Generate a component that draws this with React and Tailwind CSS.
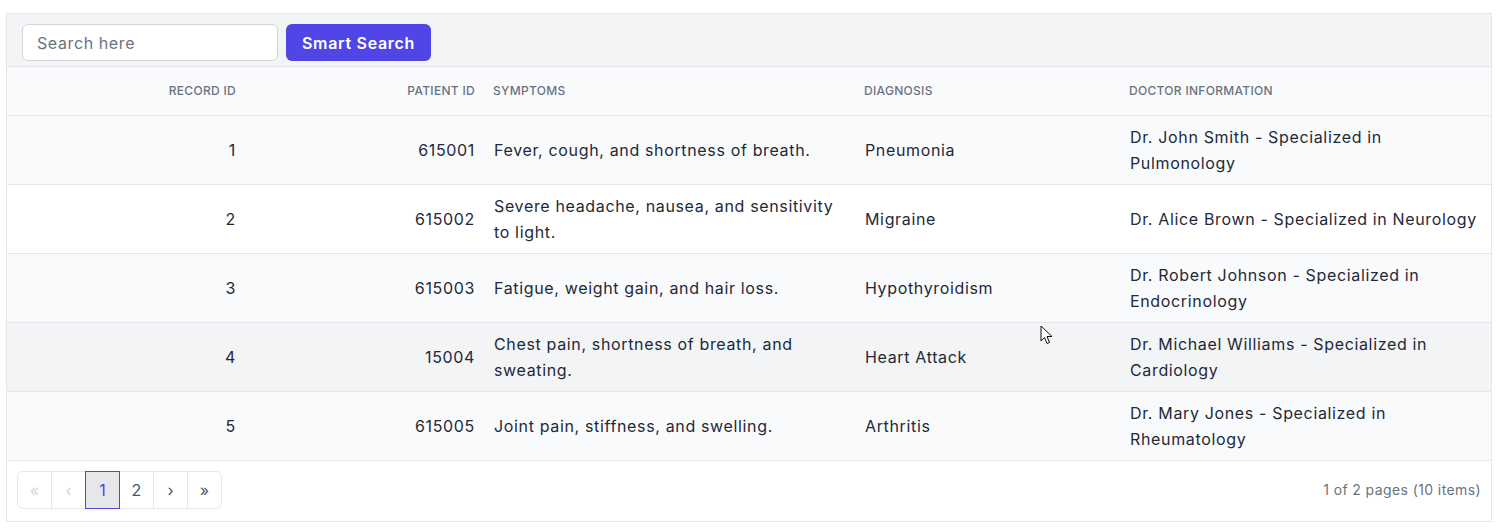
import React from "react";

const records = [
  { id: 1, patient: "615001", symptoms: "Fever, cough, and shortness of breath.", diagnosis: "Pneumonia", doctor: "Dr. John Smith - Specialized in Pulmonology" },
  { id: 2, patient: "615002", symptoms: "Severe headache, nausea, and sensitivity to light.", diagnosis: "Migraine", doctor: "Dr. Alice Brown - Specialized in Neurology" },
  { id: 3, patient: "615003", symptoms: "Fatigue, weight gain, and hair loss.", diagnosis: "Hypothyroidism", doctor: "Dr. Robert Johnson - Specialized in Endocrinology" },
  { id: 4, patient: "15004", symptoms: "Chest pain, shortness of breath, and sweating.", diagnosis: "Heart Attack", doctor: "Dr. Michael Williams - Specialized in Cardiology" },
  { id: 5, patient: "615005", symptoms: "Joint pain, stiffness, and swelling.", diagnosis: "Arthritis", doctor: "Dr. Mary Jones - Specialized in Rheumatology" },
];

const Cursor = () => (
  <svg className="absolute left-[1040px] top-[325px] pointer-events-none" width="14" height="22" viewBox="0 0 14 22">
    <path d="M1 1 L1 16 L4.5 12.5 L7 18.5 L9.5 17.5 L7 11.5 L12 11.5 Z" fill="white" stroke="#111" strokeWidth="1" />
  </svg>
);

const PageBtn = ({ children, active, disabled, first, last }) => (
  <button
    className={
      "h-[38px] w-[35px] -ml-px first:ml-0 flex items-center justify-center text-[16px] border " +
      (first ? "rounded-l-md " : "") +
      (last ? "rounded-r-md " : "") +
      (active ? "relative z-10 bg-gray-200 border-[#4f46e5] text-[#4f46e5] " : "border-gray-200 bg-white ") +
      (disabled ? "text-gray-300" : active ? "" : "text-slate-600")
    }
  >
    {children}
  </button>
);

export default function App() {
  return (
    <div className="relative min-h-[531px] bg-white pt-[13px] pl-[6px]" style={{ fontFamily: "Inter, 'Noto Sans', sans-serif" }}>
      <div className="w-[1486px] border border-gray-200">
        <div className="flex items-center gap-2 bg-gray-100 px-[15px] pt-[10px] pb-[5px] border-b border-gray-200">
          <input
            className="h-[37px] w-[256px] rounded-md border border-gray-300 bg-white px-[14px] text-[16px] tracking-[0.6px] text-gray-800 placeholder-gray-500 outline-none"
            placeholder="Search here"
          />
          <button className="h-[37px] rounded-md bg-[#4f46e5] px-4 text-[16px] font-semibold tracking-[0.7px] text-white">Smart Search</button>
        </div>
        <table className="w-full table-fixed border-collapse">
          <colgroup>
            <col className="w-[235px]" />
            <col className="w-[245px]" />
            <col className="w-[365px]" />
            <col className="w-[265px]" />
            <col />
          </colgroup>
          <thead>
            <tr className="h-[48px] bg-gray-50 border-b border-gray-200 text-[12px] font-medium uppercase tracking-[0.3px] text-gray-500">
              <th className="pr-[6px] text-right font-medium">Record ID</th>
              <th className="pr-[12px] text-right font-medium">Patient ID</th>
              <th className="pl-[6px] text-left font-medium">Symptoms</th>
              <th className="pl-[12px] text-left font-medium">Diagnosis</th>
              <th className="pl-[12px] text-left font-medium">Doctor Information</th>
            </tr>
          </thead>
          <tbody className="text-[16px] leading-[26px] tracking-[0.65px] text-gray-800">
            {records.map((r, i) => (
              <tr
                key={r.id}
                className={
                  "h-[67.6px] border-b border-gray-200 " +
                  (r.id === 4 ? "bg-gray-100" : i % 2 === 0 ? "bg-gray-50" : "bg-white")
                }
              >
                <td className="pr-[6px] text-right">{r.id}</td>
                <td className="pr-[12px] text-right">{r.patient}</td>
                <td className="pl-[7px] pr-[8px] py-2">{r.symptoms}</td>
                <td className="pl-[13px]">{r.diagnosis}</td>
                <td className="pl-[13px] pr-[8px] py-2">{r.doctor}</td>
              </tr>
            ))}
          </tbody>
        </table>
        <div className="flex items-center justify-between pl-[10px] pr-[10px] pt-[10px] pb-[12px]">
          <div className="flex">
            <PageBtn disabled first>«</PageBtn>
            <PageBtn disabled>‹</PageBtn>
            <PageBtn active>1</PageBtn>
            <PageBtn>2</PageBtn>
            <PageBtn>›</PageBtn>
            <PageBtn last>»</PageBtn>
          </div>
          <span className="text-[14px] tracking-[0.4px] text-gray-500">1 of 2 pages (10 items)</span>
        </div>
      </div>
      <Cursor />
    </div>
  );
}
